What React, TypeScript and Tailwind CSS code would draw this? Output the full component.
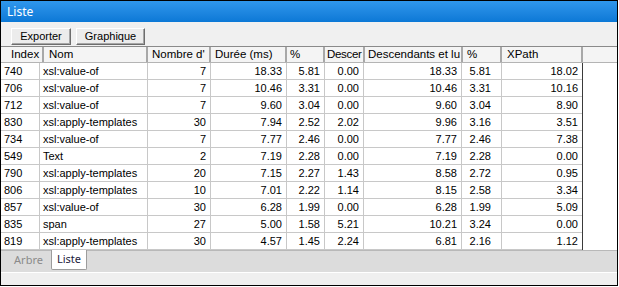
import React from 'react';

const rows = [
  ['740', 'xsl:value-of', '7', '18.33', '5.81', '0.00', '18.33', '5.81', '18.02'],
  ['706', 'xsl:value-of', '7', '10.46', '3.31', '0.00', '10.46', '3.31', '10.16'],
  ['712', 'xsl:value-of', '7', '9.60', '3.04', '0.00', '9.60', '3.04', '8.90'],
  ['830', 'xsl:apply-templates', '30', '7.94', '2.52', '2.02', '9.96', '3.16', '3.51'],
  ['734', 'xsl:value-of', '7', '7.77', '2.46', '0.00', '7.77', '2.46', '7.38'],
  ['549', 'Text', '2', '7.19', '2.28', '0.00', '7.19', '2.28', '0.00'],
  ['790', 'xsl:apply-templates', '20', '7.15', '2.27', '1.43', '8.58', '2.72', '0.95'],
  ['806', 'xsl:apply-templates', '10', '7.01', '2.22', '1.14', '8.15', '2.58', '3.34'],
  ['857', 'xsl:value-of', '30', '6.28', '1.99', '0.00', '6.28', '1.99', '5.09'],
  ['835', 'span', '27', '5.00', '1.58', '5.21', '10.21', '3.24', '0.00'],
  ['819', 'xsl:apply-templates', '30', '4.57', '1.45', '2.24', '6.81', '2.16', '1.12'],
];

// header columns sit a little off the data columns, as in the original
const headers = [
  { label: 'Index', w: 'w-[43px] pl-[10px]' },
  { label: 'Nom', w: 'w-[104px] pl-[5px]' },
  { label: "Nombre d'", w: 'w-[63px] pl-[4px]' },
  { label: 'Durée (ms)', w: 'w-[76px] pl-[4px]' },
  { label: '%', w: 'w-[38px] pl-[3px]' },
  { label: 'Descer', w: 'w-[40px] pl-[2px] tracking-[-0.3px]' },
  { label: 'Descendants et lu', w: 'w-[98px] pl-[3px]' },
  { label: '%', w: 'w-[39px] pl-[4px]' },
  { label: 'XPath', w: 'w-[81px] pl-[5px]' },
];

const cellCls = [
  'w-[39px] pl-[3px] text-left',
  'w-[108px] pl-[3px] text-left',
  'w-[63px] pr-[4px] text-right',
  'w-[76px] pr-[4px] text-right',
  'w-[38px] pr-[4px] text-right',
  'w-[39px] pr-[4px] text-right',
  'w-[98px] pr-[4px] text-right',
  'w-[40px] pr-[10px] text-right',
  'w-[80px] pr-[4px] text-right',
];

const App = () => {
  return (
    <div className="w-[619px] h-[287px] bg-white font-['Liberation_Sans',Arial,sans-serif]">
      <div className="w-[618px] h-[286px] border border-black flex flex-col overflow-hidden">
        {/* Title bar */}
        <div className="h-[21px] shrink-0 bg-gradient-to-b from-[#2f97ec] to-[#0b78d6] flex items-center pl-[6px] text-white text-[12px] font-['Noto_Sans',sans-serif]">
          Liste
        </div>

        {/* Toolbar */}
        <div className="h-[24px] shrink-0 bg-[#f0f0f0] flex items-end gap-[5px] pl-[10px] pb-[1px] text-[11px] text-black">
          <button className="h-[17px] w-[60px] bg-[#ececec] border border-t-white border-l-white border-r-[#6d6d6d] border-b-[#6d6d6d] shadow-[inset_-1px_-1px_0_#a6a6a6] leading-none">
            Exporter
          </button>
          <button className="h-[17px] w-[69px] bg-[#ececec] border border-t-white border-l-white border-r-[#6d6d6d] border-b-[#6d6d6d] shadow-[inset_-1px_-1px_0_#a6a6a6] leading-none">
            Graphique
          </button>
        </div>

        {/* Header */}
        <div className="h-[17px] shrink-0 flex bg-[#f4f4f4] border-t border-[#8a8a8a] border-b border-b-[#b4b4b4] text-[11.5px] text-black">
          {headers.map((h, i) => (
            <div
              key={i}
              className={`${h.w} shrink-0 h-full flex items-center overflow-hidden whitespace-nowrap border-r-2 border-[#a8a8a8]`}
            >
              {h.label}
            </div>
          ))}
          <div className="flex-1" />
        </div>

        {/* Data */}
        <div className="h-[187px] shrink-0 flex">
          <div className="w-[582px] border-r border-[#3a3a3a] shrink-0">
            {rows.map((r, i) => (
              <div key={i} className="h-[17px] flex border-b border-[#c8c8c8] text-[11px] text-black">
                {r.map((v, j) => (
                  <div
                    key={j}
                    className={`${cellCls[j]} shrink-0 h-full leading-[16px] overflow-hidden whitespace-nowrap ${j < 8 ? 'border-r border-[#c8c8c8]' : ''}`}
                  >
                    {v}
                  </div>
                ))}
              </div>
            ))}
          </div>
          <div className="flex-1 bg-white" />
        </div>

        {/* Tabs */}
        <div className="flex-1 flex flex-col bg-[#dcdcdc] border-t border-[#b8b8b8]">
          <div className="h-[21px] flex items-start pl-[5px] text-[11px] font-['Noto_Sans',sans-serif]">
            <div className="w-[45px] h-[19px] flex items-center justify-center text-[#8a8a8a]">Arbre</div>
            <div className="w-[36px] h-[20px] -mt-px flex items-center justify-center bg-white border border-t-0 border-[#9c9c9c] rounded-b-[2px] text-[#1c1c3c]">
              Liste
            </div>
          </div>
          <div className="flex-1 bg-[#efefef] border-t border-white" />
        </div>
      </div>
    </div>
  );
};

export default App;
